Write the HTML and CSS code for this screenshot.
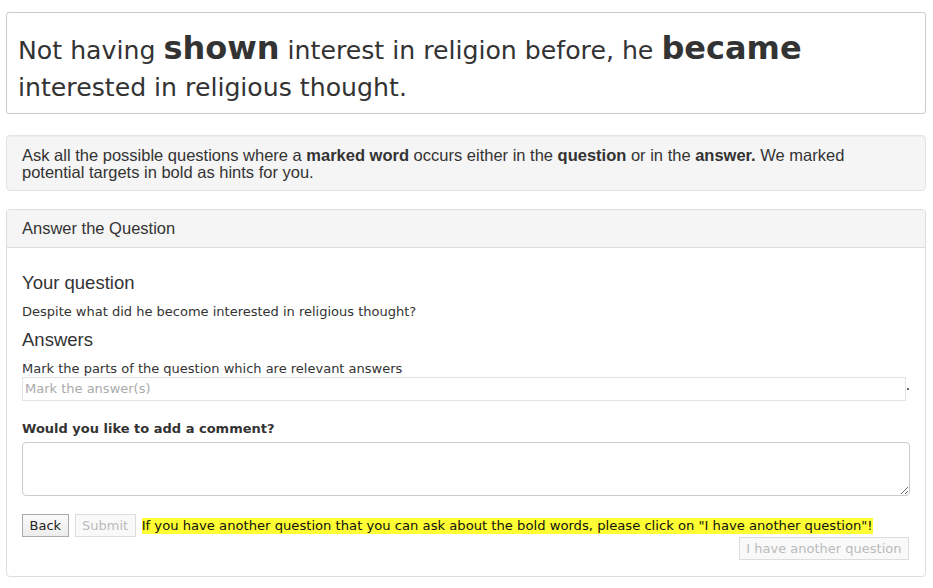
FILE: index.html
```html
<!DOCTYPE html>
<html>
<head>
<meta charset="utf-8">
<link rel="stylesheet" href="styles.css">
</head>
<body>
<div class="page">
  <div class="sentence-card">
    <p class="sentence">Not having <b class="mark">shown</b> interest in religion before, he <b class="mark">became</b> interested in religious thought.</p>
  </div>
  <div class="hint-panel">
    <span>Ask all the possible questions where a <b>marked word</b> occurs either in the <b>question</b> or in the <b>answer.</b> We marked</span>
    <span>potential targets in bold as hints for you.</span>
  </div>
  <div class="task-panel">
    <div class="task-head">Answer the Question</div>
    <div class="task-body">
      <h4 class="sub">Your question</h4>
      <p class="txt">Despite what did he become interested in religious thought?</p>
      <h4 class="sub">Answers</h4>
      <p class="txt">Mark the parts of the question which are relevant answers</p>
      <div class="answer-row">
        <div class="answer-box">Mark the answer(s)</div>
        <span class="dot"></span>
      </div>
      <p class="label">Would you like to add a comment?</p>
      <textarea class="comment"></textarea>
      <div class="actions">
        <button class="btn">Back</button>
        <button class="btn disabled">Submit</button>
        <span class="notice">If you have another question that you can ask about the bold words, please click on "I have another question"!</span>
      </div>
      <div class="another-row">
        <button class="btn disabled">I have another question</button>
      </div>
    </div>
  </div>
</div>
</body>
</html>
```
FILE: styles.css
```css
html, body {
  margin: 0;
  padding: 0;
  background: #fff;
}
.page {
  padding: 12px 7px 0 6px;
  color: #333;
}
.sentence-card {
  border: 1px solid #ccc;
  border-radius: 3px;
  padding: 17px 11px 10px 11px;
  height: 73px;
}
.sentence {
  margin: 0;
  font-family: "DejaVu Sans", Verdana, sans-serif;
  font-size: 25.2px;
  line-height: 37px;
  color: #333;
}
.mark {
  font-size: 32px;
  font-weight: bold;
}
.hint-panel {
  margin-top: 21px;
  background: #f5f5f5;
  border: 1px solid #e3e3e3;
  border-radius: 4px;
  padding: 11px 15px 9px 15px;
  font-family: "Liberation Sans", Arial, sans-serif;
  font-size: 16.5px;
  line-height: 17px;
  color: #333;
  box-shadow: inset 0 1px 1px rgba(0,0,0,0.03);
}
.task-panel {
  margin-top: 18px;
  border: 1px solid #ddd;
  border-radius: 4px;
  height: 366px;
}
.task-head {
  background: #f5f5f5;
  border-bottom: 1px solid #ddd;
  border-radius: 3px 3px 0 0;
  height: 37px;
  padding: 0 15px;
  display: flex;
  align-items: center;
  font-family: "Liberation Sans", Arial, sans-serif;
  font-size: 16.5px;
  color: #333;
}
.task-body {
  padding: 24px 15px 0 15px;
}
.sub {
  margin: 0;
  font-family: "Liberation Sans", Arial, sans-serif;
  font-size: 18.5px;
  font-weight: 500;
  line-height: 22px;
  color: #333;
}
.txt {
  margin: 9px 0 8px 0;
  font-family: "DejaVu Sans", Verdana, sans-serif;
  font-size: 13px;
  line-height: 18px;
  color: #333;
}
.answer-row {
  display: flex;
  align-items: center;
  margin-top: -9px;
}
.answer-box {
  width: 880px;
  height: 22px;
  border: 1px solid #e3e3e3;
  padding-left: 2px;
  font-family: "DejaVu Sans", Verdana, sans-serif;
  font-size: 13px;
  line-height: 22px;
  color: #aaa;
}
.dot {
  width: 2px;
  height: 2px;
  background: #666;
  margin-left: 1px;
}
.label {
  margin: 20px 0 6px 0;
  font-family: "DejaVu Sans", Verdana, sans-serif;
  font-size: 13px;
  font-weight: bold;
  color: #333;
}
.comment {
  display: block;
  box-sizing: border-box;
  width: 888px;
  height: 54px;
  border: 1px solid #ccc;
  border-radius: 4px;
  margin: 0;
  resize: vertical;
}
.actions {
  margin-top: 18px;
  display: flex;
  align-items: center;
  gap: 6px;
}
.btn {
  font-family: "DejaVu Sans", Verdana, sans-serif;
  font-size: 13px;
  color: #222;
  background: linear-gradient(#fafafa, #ececec);
  border: 1px solid #aaa;
  height: 23px;
  padding: 0 6.5px;
  margin: 0;
}
.btn.disabled {
  color: #bbb;
  background: #f9f9f9;
  border-color: #ddd;
}
.notice {
  background: #ffff33;
  color: #111;
  font-family: "DejaVu Sans", Verdana, sans-serif;
  font-size: 13.15px;
  line-height: 16px;
}
.another-row {
  display: flex;
  justify-content: flex-end;
  padding-right: 1px;
}
```
